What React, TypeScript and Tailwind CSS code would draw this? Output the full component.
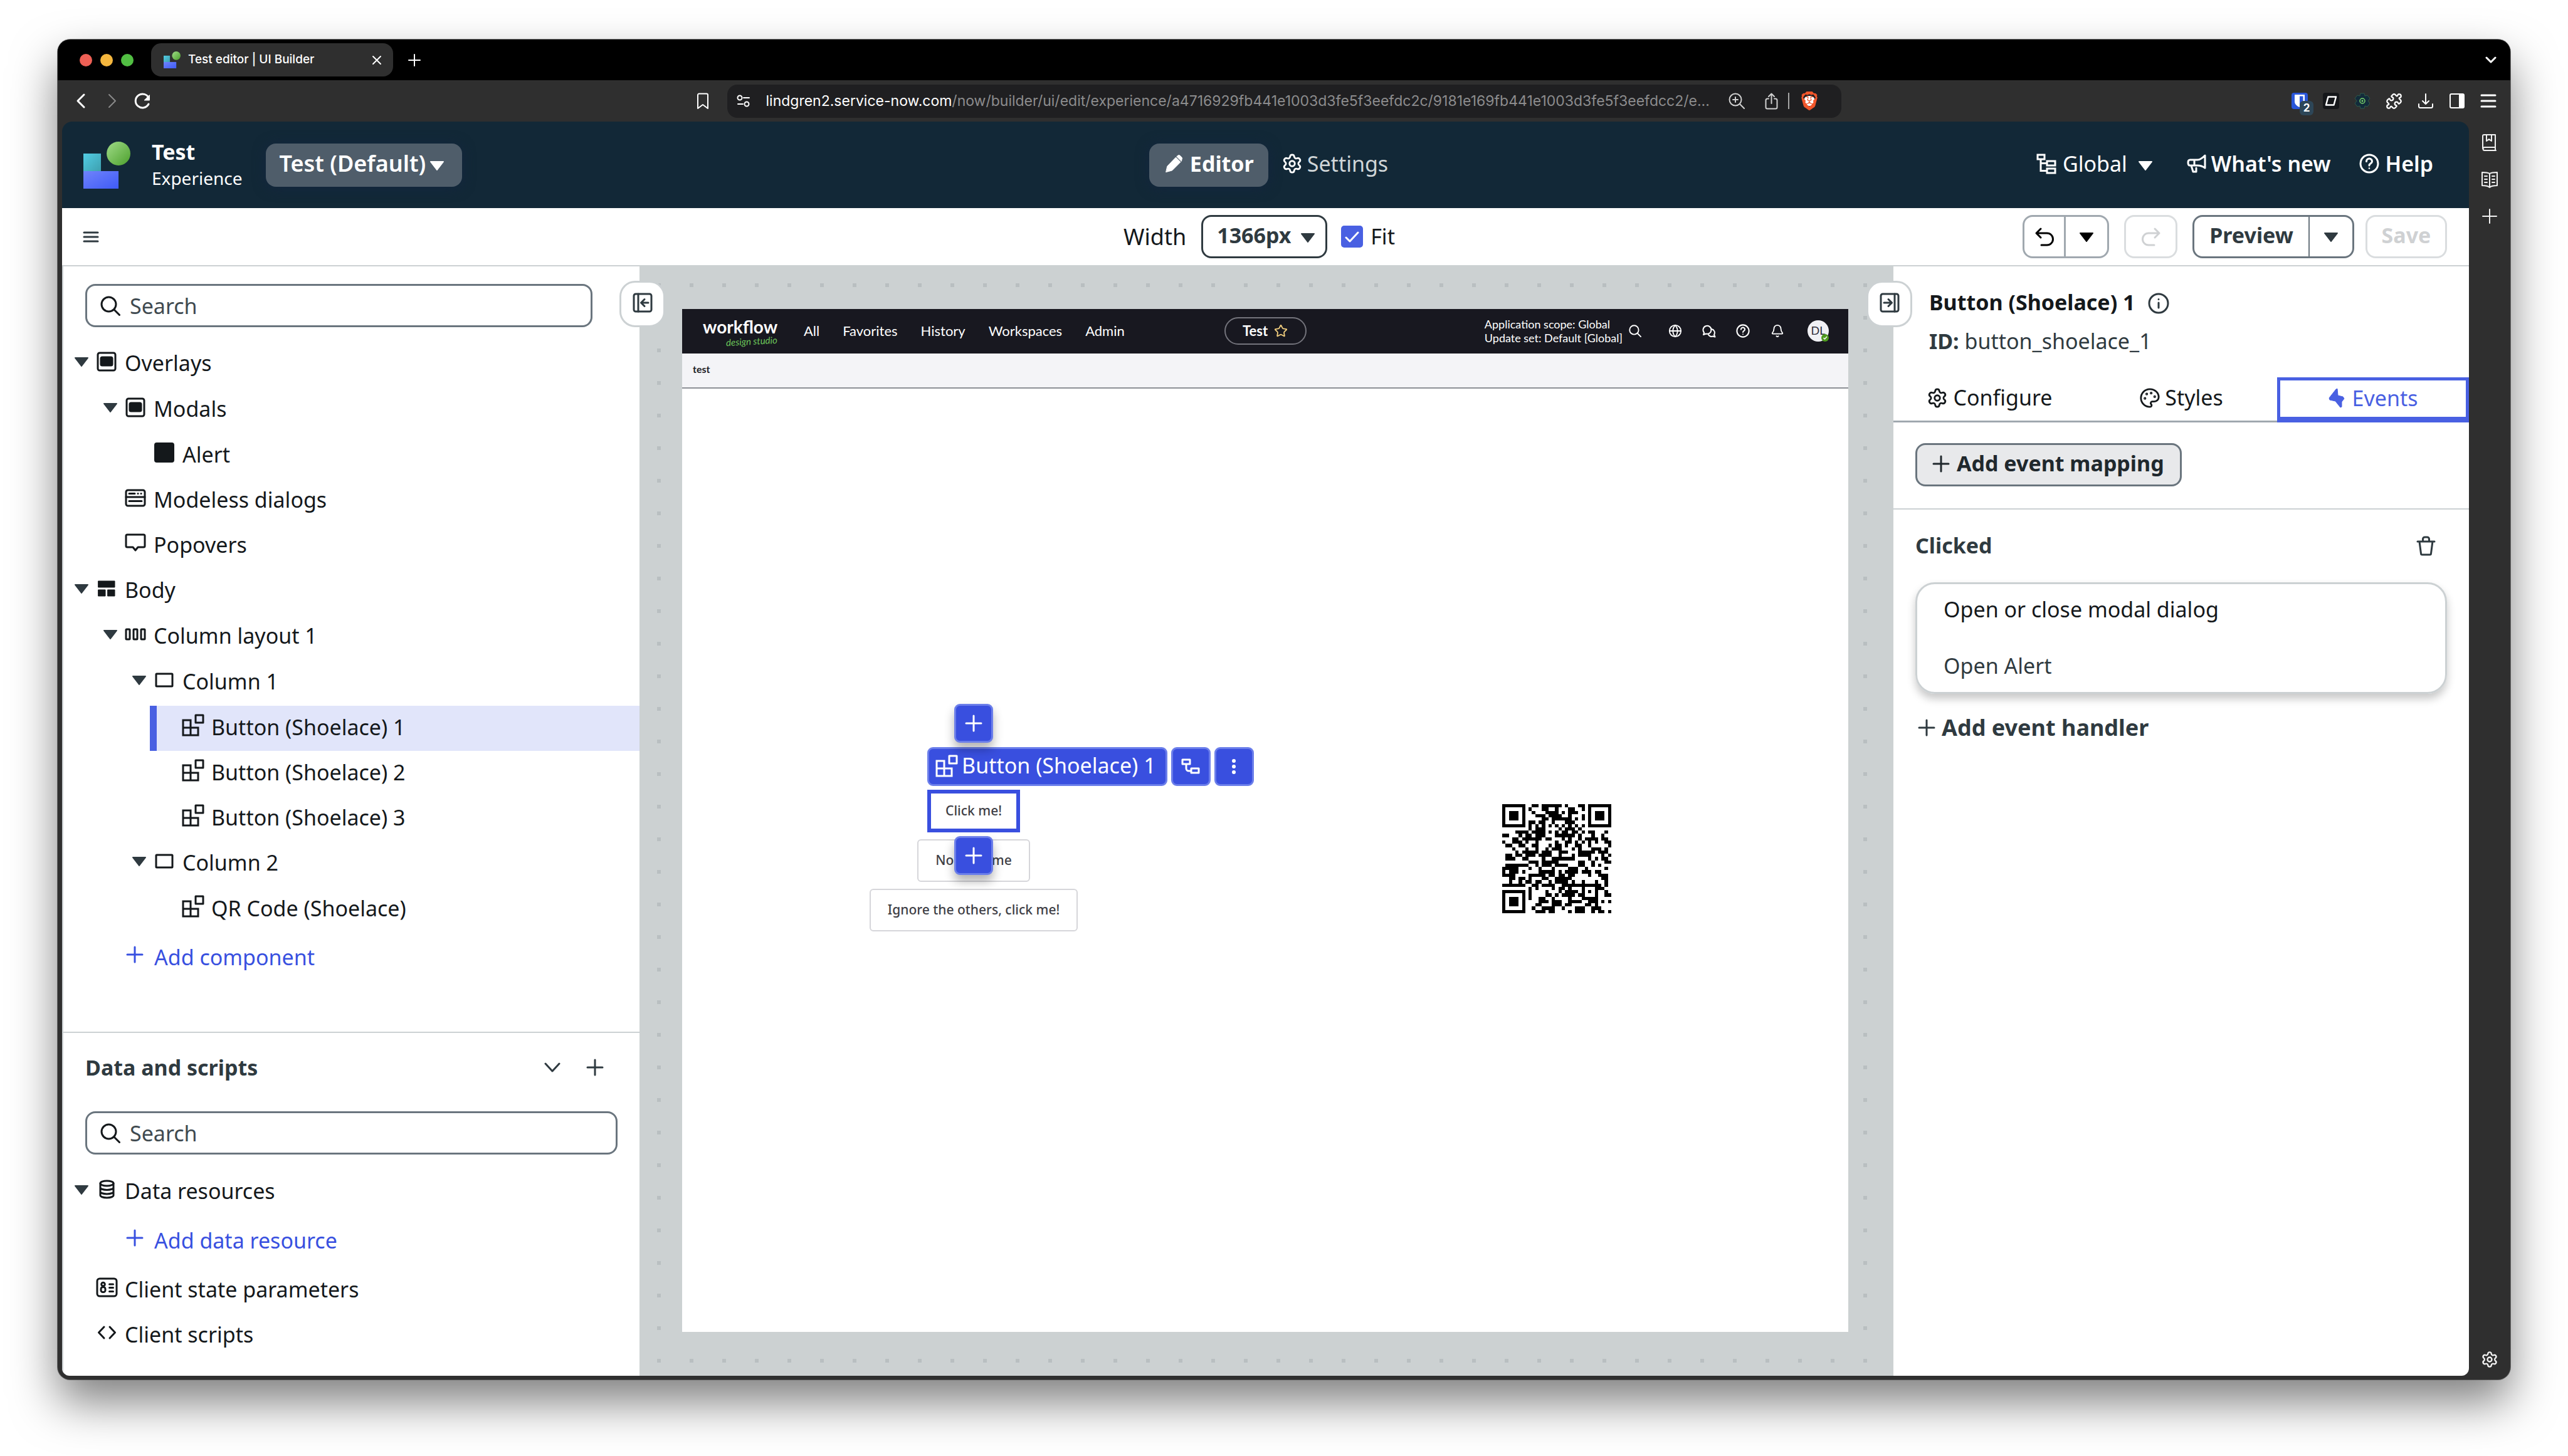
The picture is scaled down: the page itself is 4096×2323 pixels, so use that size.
import React, { ReactNode } from 'react';
import { Bell, Globe, Palette, Puzzle, Settings, Star } from 'lucide-react';
import { SiBrave } from 'react-icons/si';

/* ---------- QR code (version 4, level H, mask 4) ---------- */

const SIZE = 33;

function gfMul(a: number, b: number) {
  let r = 0;
  while (b) {
    if (b & 1) r ^= a;
    a <<= 1;
    if (a & 256) a ^= 0x11d;
    b >>= 1;
  }
  return r;
}

function errorWords(data: number[], count: number) {
  let gen = [1];
  let root = 1;
  for (let i = 0; i < count; i++) {
    const next = new Array(gen.length + 1).fill(0);
    gen.forEach((c, j) => {
      next[j] ^= c;
      next[j + 1] ^= gfMul(c, root);
    });
    gen = next;
    root = gfMul(root, 2);
  }
  const rem = [...data, ...new Array(count).fill(0)];
  for (let i = 0; i < data.length; i++) {
    const c = rem[i];
    if (c) for (let j = 0; j < gen.length; j++) rem[i + j] ^= gfMul(gen[j], c);
  }
  return rem.slice(data.length);
}

function encodeQr(text: string) {
  const byte = (n: number) => n.toString(2).padStart(8, '0');
  let bits = '0100' + byte(text.length);
  for (const ch of text) bits += byte(ch.charCodeAt(0));
  bits += '0000';
  while (bits.length % 8) bits += '0';
  const words: number[] = [];
  for (let i = 0; i < bits.length; i += 8) words.push(parseInt(bits.slice(i, i + 8), 2));
  for (let p = 0; words.length < 36; p++) words.push(p % 2 ? 17 : 236);

  const blocks = [0, 1, 2, 3].map((i) => words.slice(i * 9, i * 9 + 9));
  const checks = blocks.map((b) => errorWords(b, 16));
  const all: number[] = [];
  for (let i = 0; i < 9; i++) blocks.forEach((b) => all.push(b[i]));
  for (let i = 0; i < 16; i++) checks.forEach((b) => all.push(b[i]));

  const m: (number | null)[][] = Array.from({ length: SIZE }, () => new Array(SIZE).fill(null));
  const finder = (r0: number, c0: number) => {
    for (let r = -1; r < 8; r++)
      for (let c = -1; c < 8; c++) {
        const y = r0 + r;
        const x = c0 + c;
        if (y < 0 || x < 0 || y >= SIZE || x >= SIZE) continue;
        const k = Math.max(Math.abs(r - 3), Math.abs(c - 3));
        m[y][x] = k === 3 || k <= 1 ? 1 : 0;
      }
  };
  finder(0, 0);
  finder(0, 26);
  finder(26, 0);
  for (let r = -2; r < 3; r++)
    for (let c = -2; c < 3; c++) m[26 + r][26 + c] = Math.max(Math.abs(r), Math.abs(c)) === 1 ? 0 : 1;
  for (let i = 8; i < 25; i++) {
    m[6][i] = 1 - (i % 2);
    m[i][6] = 1 - (i % 2);
  }
  const format = '000011101100010';
  for (let i = 0; i < 15; i++) {
    const b = Number(format[14 - i]);
    if (i < 6) m[i][8] = b;
    else if (i < 8) m[i + 1][8] = b;
    else m[SIZE - 15 + i][8] = b;
    if (i < 8) m[8][SIZE - 1 - i] = b;
    else if (i < 9) m[8][7] = b;
    else m[8][14 - i] = b;
  }
  m[SIZE - 8][8] = 1;

  const stream = all.map(byte).join('') + '0000000';
  let k = 0;
  let up = true;
  for (let c = SIZE - 1; c > 0; c -= 2) {
    if (c === 6) c--;
    for (let i = 0; i < SIZE; i++) {
      const r = up ? SIZE - 1 - i : i;
      for (const x of [c, c - 1])
        if (m[r][x] === null) {
          const flip = (Math.floor(r / 2) + Math.floor(x / 3)) % 2 === 0 ? 1 : 0;
          m[r][x] = Number(stream[k++]) ^ flip;
        }
    }
    up = !up;
  }
  return m as number[][];
}

function QrCode({ value, className }: { value: string; className: string }) {
  const d = encodeQr(value)
    .map((row, y) => row.map((v, x) => (v ? `M${x} ${y}h1v1h-1z` : '')).join(''))
    .join('');
  return (
    <svg viewBox="0 0 33 33" className={className} shapeRendering="crispEdges" role="img" aria-label="QR code">
      <path d={d} fill="#000" />
    </svg>
  );
}

/* ---------- Icons ---------- */

function Icon({ w, h, sw = 3, className = '', children }: { w: number; h: number; sw?: number; className?: string; children: ReactNode }) {
  return (
    <svg
      width={w}
      height={h}
      viewBox={`0 0 ${w} ${h}`}
      fill="none"
      stroke="currentColor"
      strokeWidth={sw}
      strokeLinecap="round"
      strokeLinejoin="round"
      aria-hidden="true"
      className={`shrink-0 ${className}`}
    >
      {children}
    </svg>
  );
}

const Caret = ({ className = '' }: { className?: string }) => (
  <Icon w={24} h={16} sw={2} className={className}>
    <path d="M2 2h20L12 15z" fill="currentColor" />
  </Icon>
);
const Plus = ({ size = 26, className = '' }: { size?: number; className?: string }) => (
  <Icon w={size} h={size} sw={3} className={className}>
    <path d={`M${size / 2} 2V${size - 2}M2 ${size / 2}H${size - 2}`} />
  </Icon>
);
const SearchIcon = ({ w = 32, sw = 3 }: { w?: number; sw?: number }) => (
  <svg width={w} height={w} viewBox="0 0 32 32" fill="none" stroke="currentColor" strokeWidth={sw} strokeLinecap="round" aria-hidden="true" className="shrink-0">
    <circle cx="13.5" cy="13.5" r="11.5" />
    <path d="M22 22l8.5 8.5" />
  </svg>
);
const HelpIcon = ({ w = 31, sw = 3 }: { w?: number; sw?: number }) => (
  <svg width={w} height={w} viewBox="0 0 32 32" fill="none" stroke="currentColor" strokeWidth={sw} strokeLinecap="round" aria-hidden="true" className="shrink-0">
    <circle cx="16" cy="16" r="14" />
    <path d="M11.5 12.5a4.5 4.5 0 119 0c0 3.4-4.500 3.200-4.500 6.500" />
    <circle cx="16" cy="23.500" r="1.300" fill="currentColor" stroke="none" />
  </svg>
);
const PanelIcon = ({ flip = false }: { flip?: boolean }) => (
  <Icon w={32} h={32} sw={3}>
    <rect x="2" y="2" width="28" height="28" rx="3" />
    {flip ? <path d="M24 2v28M7 16h11M14 10.500l5.500 5.500-5.500 5.500" /> : <path d="M9 2v28M25 16H14M19 10.500L13.500 16l5.500 5.500" />}
  </Icon>
);
const ComponentIcon = () => (
  <Icon w={36} h={36} sw={3}>
    <path d="M2 10h12v12H2zM2 22h12v12H2zM14 22h12v12H14z" strokeLinejoin="miter" />
    <path d="M22 2h12v12H22z" />
  </Icon>
);
const OverlayIcon = () => (
  <Icon w={32} h={32} sw={3}>
    <rect x="2" y="2" width="28" height="28" rx="3" />
    <rect x="7" y="9" width="18" height="13" rx="2" fill="currentColor" />
  </Icon>
);
const SolidIcon = () => (
  <Icon w={32} h={32} sw={2}>
    <rect x="1" y="1" width="30" height="30" rx="3" fill="currentColor" />
  </Icon>
);
const ModelessIcon = () => (
  <Icon w={34} h={29} sw={3}>
    <rect x="2" y="2" width="30" height="25" rx="3" />
    <path d="M2 13h30M7 7.500h9M21 7.500h.1M26 7.500h.1M7 19.500h20" />
  </Icon>
);
const PopoverIcon = () => (
  <Icon w={34} h={30} sw={3}>
    <path d="M4 2h26a2 2 0 012 2v16a2 2 0 01-2 2h-9l-4 5-4-5H4a2 2 0 01-2-2V4a2 2 0 012-2z" />
  </Icon>
);
const BodyIcon = () => (
  <Icon w={28} h={26} sw={1}>
    <path d="M1 1h26v10H1zM1 15h11v10H1zM16 15h11v10H16z" fill="currentColor" />
  </Icon>
);
const ColumnsIcon = () => (
  <Icon w={34} h={20} sw={3}>
    <rect x="2" y="2" width="6" height="16" rx="1" />
    <rect x="14" y="2" width="6" height="16" rx="1" />
    <rect x="26" y="2" width="6" height="16" rx="1" />
  </Icon>
);
const ColumnIcon = () => (
  <Icon w={30} h={24} sw={3}>
    <rect x="2" y="2" width="26" height="20" rx="1" />
  </Icon>
);
const DatabaseIcon = () => (
  <Icon w={25} h={31} sw={3}>
    <ellipse cx="12.500" cy="6" rx="10.500" ry="4" />
    <path d="M2 6v19c0 2 4 4 10.500 4S23 27 23 25V6M2 12.500c0 2 4 4 10.500 4s10.500-2 10.500-4M2 19c0 2 4 4 10.500 4S23 21 23 19" />
  </Icon>
);
const ParamsIcon = () => (
  <Icon w={35} h={32} sw={3}>
    <rect x="2" y="2" width="31" height="28" rx="4" />
    <circle cx="11.500" cy="11" r="2.800" />
    <rect x="8" y="15.500" width="7" height="8" rx="3" />
    <path d="M21.500 11h6M21.500 16.500h6M21.500 22.500h6" />
  </Icon>
);
const CodeIcon = () => (
  <Icon w={31} h={24} sw={3}>
    <path d="M11 3L2.500 12l8.500 9M20 3l8.500 9-8.500 9" />
  </Icon>
);
const Logo = ({ className }: { className: string }) => (
  <svg viewBox="0 0 91 91" className={className} aria-hidden="true">
    <defs>
      <linearGradient id="lg-teal" x1="0" y1="0" x2="1" y2="1">
        <stop offset="0" stopColor="#52cde4" />
        <stop offset="1" stopColor="#3d9fae" />
      </linearGradient>
      <linearGradient id="lg-blue" x1="0" y1="0" x2="1" y2="1">
        <stop offset="0" stopColor="#6f83fb" />
        <stop offset="1" stopColor="#3f5bf6" />
      </linearGradient>
      <linearGradient id="lg-green" x1="0" y1="0" x2="1" y2="1">
        <stop offset="0" stopColor="#a0dc88" />
        <stop offset="1" stopColor="#4c9f2c" />
      </linearGradient>
    </defs>
    <rect x="0" y="23" width="34" height="35" fill="url(#lg-teal)" />
    <rect x="0" y="57" width="68" height="34" fill="url(#lg-blue)" />
    <circle cx="68" cy="23" r="23" fill="url(#lg-green)" />
  </svg>
);

/* ---------- Browser chrome ---------- */

function TabStrip() {
  return (
    <div className="flex h-[65px] items-center bg-black pl-[35px] pr-[22px] text-white">
      <div className="flex gap-[13px]">
        <button aria-label="Close window" className="size-5 rounded-full bg-[#ee6055]" />
        <button aria-label="Minimize window" className="size-5 rounded-full bg-[#f5b73e]" />
        <button aria-label="Zoom window" className="size-5 rounded-full bg-[#52bf43]" />
      </div>
      <div className="ml-[28px] flex h-[53px] w-[386px] items-center rounded-2xl bg-[#2f2f2f] pl-5 pr-[18px]">
        <Logo className="size-[27px]" />
        <span className="ml-3 flex-1 text-[19px] font-medium">Test editor | UI Builder</span>
        <button aria-label="Close tab">
          <Icon w={16} h={16} sw={2}>
            <path d="M2 2l12 12M14 2L2 14" />
          </Icon>
        </button>
      </div>
      <button aria-label="New tab" className="ml-6">
        <Icon w={20} h={20} sw={2}>
          <path d="M10 1v18M1 10h18" />
        </Icon>
      </button>
      <button aria-label="Search tabs" className="ml-auto">
        <Icon w={18} h={12} sw={3}>
          <path d="M2 2l7 7 7-7" />
        </Icon>
      </button>
    </div>
  );
}

function AddressBar() {
  return (
    <div className="grid h-[66px] grid-cols-[1fr_1777px_1fr] items-center text-white">
      <div className="flex items-center px-[29px]">
        <button aria-label="Back">
          <Icon w={16} h={26} sw={3}>
            <path d="M13 3L3 13l10 10" />
          </Icon>
        </button>
        <button aria-label="Forward" className="ml-[34px] text-[#8a8a8a]">
          <Icon w={16} h={26} sw={2}>
            <path d="M3 3l10 10L3 23" />
          </Icon>
        </button>
        <button aria-label="Reload" className="ml-[26px]">
          <Icon w={28} h={28} sw={3}>
            <path d="M24 19a11 11 0 11.500-9" />
            <path d="M25.500 5v8h-8z" fill="currentColor" strokeWidth="1" />
          </Icon>
        </button>
        <button aria-label="Bookmark" className="ml-auto">
          <Icon w={20} h={27} sw={2}>
            <path d="M4 1.500h12a2 2 0 012 2V25l-8-6-8 6V3.500a2 2 0 012-2z" />
          </Icon>
        </button>
      </div>
      <div className="flex h-[53px] items-center rounded-2xl bg-[#1f1f21] pl-[15px] pr-9">
        <Icon w={22} h={20} sw={2}>
          <circle cx="5" cy="5" r="3.500" />
          <path d="M11 5h9M2 15h8" />
          <circle cx="16" cy="15" r="3.500" />
        </Icon>
        <div className="ml-[25px] flex-1 truncate text-[23px] text-[#8c8c8d]">
          <span className="text-white">lindgren2.service-now.com</span>
          /now/builder/ui/edit/experience/a4716929fb441e1003d3fe5f3eefdc2c/9181e169fb441e1003d3fe5f3eefdcc2/e...
        </div>
        <button aria-label="Page zoom" className="text-[#d0d0d0]">
          <Icon w={26} h={26} sw={2}>
            <circle cx="11" cy="11" r="9.500" />
            <path d="M18 18l7 7M11 7v8M7 11h8" />
          </Icon>
        </button>
        <button aria-label="Share" className="ml-8 text-[#d0d0d0]">
          <Icon w={21} h={27} sw={2}>
            <path d="M6 9.500H4a2.500 2.500 0 00-2.500 2.500v11A2.500 2.500 0 004 25.500h13a2.500 2.500 0 002.500-2.500V12A2.500 2.500 0 0017 9.500h-2M10.500 17V2M6 6l4.500-4.500L15 6" />
          </Icon>
        </button>
        <span className="ml-4 h-[26px] w-[2px] bg-[#a5a5a5]" />
        <button aria-label="Brave Shields" className="relative ml-[17px]">
          <span className="absolute inset-x-[6px] inset-y-[7px] rounded-full bg-white" />
          <SiBrave className="relative size-[30px] text-[#f1562b]" />
        </button>
      </div>
      <div className="flex items-center justify-end gap-6 pr-[22px]">
        <button aria-label="Password manager, 2 logins" className="relative">
          <svg width="26" height="26" viewBox="0 0 26 26" aria-hidden="true">
            <rect width="26" height="26" rx="4" fill="#2a56d8" />
            <path d="M5 3h16v11c0 5-5 8-8 9-3-1-8-4-8-9z" fill="#fff" />
            <path d="M13 5.500h5.500V14c0 3-3 5-5.500 6z" fill="#2a56d8" />
          </svg>
          <span className="absolute -bottom-[10px] left-[13px] flex h-[23px] w-[22px] items-center justify-center rounded-md bg-[#2d4657] text-[17px] font-bold">2</span>
        </button>
        <button aria-label="Extension">
          <svg width="26" height="26" viewBox="0 0 26 26" aria-hidden="true">
            <rect width="26" height="26" rx="4" fill="#15171a" />
            <path d="M8.500 6.500H21l-3.500 13H5z" fill="none" stroke="#fff" strokeWidth="2.500" strokeLinejoin="round" />
          </svg>
        </button>
        <button aria-label="Gear extension">
          <svg width="26" height="26" viewBox="0 0 26 26" aria-hidden="true">
            <path d="M10 1h6l1 4 4-1 4 5-3 4 3 4-4 5-4-1-1 4h-6l-1-4-4 1-4-5 3-4-3-4 4-5 4 1z" fill="#122b3a" stroke="#2f5a4a" />
            <circle cx="13" cy="13" r="4" fill="none" stroke="#79d66b" strokeWidth="1.500" />
            <circle cx="13" cy="13" r="1.500" fill="#79d66b" />
          </svg>
        </button>
        <button aria-label="Extensions">
          <Puzzle className="size-[27px]" strokeWidth={2} />
        </button>
        <button aria-label="Downloads">
          <Icon w={26} h={26} sw={2}>
            <path d="M13 2v16M8 13l5 5 5-5M2 18v3.500A2.500 2.500 0 004.500 24h17a2.500 2.500 0 002.500-2.500V18" />
          </Icon>
        </button>
        <button aria-label="Sidebar">
          <Icon w={26} h={26} sw={2}>
            <rect x="2" y="2" width="22" height="22" rx="2" />
            <path d="M17 3h6v20h-6z" fill="currentColor" />
          </Icon>
        </button>
        <button aria-label="Browser menu">
          <Icon w={26} h={22} sw={3}>
            <path d="M2 2h22M2 11h22M2 20h22" />
          </Icon>
        </button>
      </div>
    </div>
  );
}

function BrowserRail() {
  return (
    <nav aria-label="Browser sidebar" className="flex w-[66px] flex-col items-center pb-[18px] pt-[19px] text-[#f1f1f1]">
      <button aria-label="Bookmarks">
        <Icon w={26} h={28} sw={2}>
          <path d="M4 2h18v20H5a2.500 2.500 0 000 5h18M22 22v5M4 2a2 2 0 00-2 2v20M8 2v10l4-3 4 3V2" />
        </Icon>
      </button>
      <button aria-label="Reading list" className="mt-8">
        <Icon w={28} h={28} sw={2}>
          <path d="M14 4v22M14 4c-3-2-8-2-12-2v21c4 0 9 0 12 3 3-3 8-3 12-3V2c-4 0-9 0-12 2zM6 8h4M6 13h4M6 18h4M18 8h4M18 13h4M18 18h4" />
        </Icon>
      </button>
      <button aria-label="Add site" className="mt-8">
        <Icon w={24} h={24} sw={2}>
          <path d="M12 1v22M1 12h22" />
        </Icon>
      </button>
      <button aria-label="Sidebar settings" className="mt-auto">
        <Settings className="size-7" strokeWidth={2} />
      </button>
    </nav>
  );
}

/* ---------- Application header and toolbar ---------- */

function Header() {
  return (
    <header className="grid h-[138px] grid-cols-[1fr_auto_1fr] items-center rounded-t-2xl bg-[#122837] text-white">
      <div className="flex items-center pl-[34px]">
        <Logo className="size-[75px]" />
        <div className="ml-[34px]">
          <div className="text-[34px] font-bold leading-[42px]">Test</div>
          <div className="text-[28px] leading-[42px]">Experience</div>
        </div>
        <button className="ml-[37px] flex h-[69px] items-center gap-1.5 rounded-2xl bg-[#4f5d6a] pb-1 pl-[22px] pr-7 text-[36px] font-semibold shadow-[0_2px_20px_#14263f]">
          Test (Default)
          <Caret className="mt-1.5" />
        </button>
      </div>
      <nav className="ml-2.5 flex items-center" aria-label="View">
        <button className="flex h-[69px] items-center gap-2 rounded-2xl bg-[#4f5d6a] pb-1 pl-[25px] pr-[23px] text-[34px] font-bold shadow-[0_2px_20px_#14263f]">
          <Icon w={32} h={30} sw={1}>
            <path d="M4 19L17.500 5l7.500 7.500L11.500 26 2 28.500z" fill="currentColor" />
            <path d="M19 3.500l2-1.500c2-1 3 0 4.500 1.500s3 3 1.500 5L26.500 11z" fill="currentColor" />
          </Icon>
          Editor
        </button>
        <button className="flex h-[69px] items-center gap-[7px] pb-1 pl-[21px] text-[34px] text-[#cfd5d7]">
          <Settings className="size-[34px] text-white" strokeWidth={2} />
          Settings
        </button>
      </nav>
      <div className="flex items-center justify-end pb-1 pr-[57px] text-[34px]">
        <button className="flex items-center">
          <Icon w={32} h={33} sw={3}>
            <path d="M2 2h11v7H2zM17 12h13v7H17zM17 24h13v7H17zM7 9v18.500h10M7 15.500h10" strokeLinejoin="miter" />
          </Icon>
          <span className="ml-[10px]">Global</span>
          <Caret className="ml-[17px] mt-1.5" />
        </button>
        <a href="#whats-new" className="ml-[54px] flex items-center gap-[7px] font-semibold">
          <Icon w={32} h={32} sw={3}>
            <path d="M29 3v20c-4-3-8-4-12-4H5c-2 0-3-2-3-4.500S3 10 5 10h12c4 0 8-3 12-7zM12 10v9M7 19l3 10h5v-6" />
          </Icon>
          What's new
        </a>
        <a href="#help" className="ml-[45px] flex items-center gap-[10px] font-semibold">
          <HelpIcon w={32} />
          Help
        </a>
      </div>
    </header>
  );
}

function Toolbar() {
  return (
    <div className="grid h-[93px] grid-cols-[1fr_auto_1fr] items-center border-b-2 border-[#ccd1d3] bg-white text-[#2f3a40]">
      <div className="flex pl-[33px]">
        <button aria-label="Menu">
          <Icon w={26} h={18} sw={3}>
            <path d="M2 2h22M2 9h22M2 16h22" />
          </Icon>
        </button>
      </div>
      <div className="mr-5 flex items-center text-[36px] text-[#14181b]">
        <label htmlFor="viewport-width">Width</label>
        <div className="relative ml-6 text-[#2f3a40]">
          <select id="viewport-width" className="h-[69px] w-[201px] appearance-none rounded-2xl border-[3px] border-[#2f3a40] bg-white pb-1 pl-[22px] text-[34px] font-bold">
            <option>1366px</option>
          </select>
          <span className="pointer-events-none absolute right-[19px] top-[28px]">
            <Caret />
          </span>
        </div>
        <label className="relative ml-[22px] flex items-center gap-3 text-[34px]">
          <input type="checkbox" defaultChecked className="size-[35px] appearance-none rounded-[5px] bg-[#4960e2]" />
          <span className="pointer-events-none absolute left-[6px] text-white">
            <Icon w={23} h={20} sw={3}>
              <path d="M2 11l6 6L21 3" />
            </Icon>
          </span>
          Fit
        </label>
      </div>
      <div className="flex items-center justify-end pr-[35px]">
        <div className="flex h-[69px] rounded-2xl border-[3px] border-[#a0a8af] text-black">
          <button aria-label="Undo" className="flex w-[66px] items-center justify-center border-r-[3px] border-[#a0a8af]">
            <Icon w={32} h={32} sw={3}>
              <path d="M10 3L3 10l7 7M3 10h17a9 9 0 010 19h-9" />
            </Icon>
          </button>
          <button aria-label="Undo history" className="flex w-[66px] items-center justify-center">
            <Caret />
          </button>
        </div>
        <button aria-label="Redo" disabled className="ml-6 flex h-[69px] w-[85px] items-center justify-center rounded-2xl border-[3px] border-[#dadddf] text-[#cfd1d3]">
          <Icon w={32} h={32} sw={3}>
            <path d="M22 3l7 7-7 7M29 10H12a9 9 0 000 19h9" />
          </Icon>
        </button>
        <div className="ml-6 flex h-[69px] rounded-2xl border-[3px] border-[#6a757e]">
          <button className="w-[184px] border-r-2 border-[#6a757e] pb-1 text-[34px] font-bold">Preview</button>
          <button aria-label="Preview options" className="flex w-[68px] items-center justify-center">
            <Caret />
          </button>
        </div>
        <button disabled className="ml-[18px] h-[69px] w-[130px] rounded-2xl border-[3px] border-[#dadddf] pb-1 text-[34px] font-bold text-[#cfd1d3]">
          Save
        </button>
      </div>
    </div>
  );
}

/* ---------- Left panel ---------- */

function SearchBox({ id, className }: { id: string; className: string }) {
  return (
    <div className={`relative text-[#14181b] ${className}`}>
      <label htmlFor={id} className="absolute left-6 top-[19px]">
        <SearchIcon />
      </label>
      <input
        id={id}
        type="text"
        aria-label="Search"
        placeholder="Search"
        className="h-[69px] w-full rounded-2xl border-[3px] border-[#6a757e] bg-white pl-[68px] text-[34px] placeholder:text-[#3f4a50]"
      />
    </div>
  );
}

type Node = { depth: number; label: string; icon: ReactNode; open?: boolean; selected?: boolean };

const tree: Node[] = [
  { depth: 0, label: 'Overlays', icon: <OverlayIcon />, open: true },
  { depth: 1, label: 'Modals', icon: <OverlayIcon />, open: true },
  { depth: 2, label: 'Alert', icon: <SolidIcon /> },
  { depth: 1, label: 'Modeless dialogs', icon: <ModelessIcon /> },
  { depth: 1, label: 'Popovers', icon: <PopoverIcon /> },
  { depth: 0, label: 'Body', icon: <BodyIcon />, open: true },
  { depth: 1, label: 'Column layout 1', icon: <ColumnsIcon />, open: true },
  { depth: 2, label: 'Column 1', icon: <ColumnIcon />, open: true },
  { depth: 3, label: 'Button (Shoelace) 1', icon: <ComponentIcon />, selected: true },
  { depth: 3, label: 'Button (Shoelace) 2', icon: <ComponentIcon /> },
  { depth: 3, label: 'Button (Shoelace) 3', icon: <ComponentIcon /> },
  { depth: 2, label: 'Column 2', icon: <ColumnIcon />, open: true },
  { depth: 3, label: 'QR Code (Shoelace)', icon: <ComponentIcon /> },
];

const depthPad = ['pl-[19px]', 'pl-[65px]', 'pl-[111px]', 'pl-[40px]'];

function TreeRow({ node }: { node: Node }) {
  const { depth, label, icon, open, selected } = node;
  const leaf = depth === 3 ? 'ml-[140px] border-l-[11px]' : '';
  const tint = selected ? 'bg-[#e1e5fa] border-[#4960e2]' : 'border-transparent';
  return (
    <li className={`flex items-center pb-1 ${open ? 'h-[73px]' : 'h-[72px]'} ${leaf} ${tint} ${depthPad[depth]}`}>
      {depth < 3 && (
        <span className="mr-[10px] w-6 text-[#2f3a40]">
          {open && (
            <button aria-label={`Collapse ${label}`} className="mb-1.5 block">
              <Caret />
            </button>
          )}
        </span>
      )}
      <span className="mb-1.5 flex w-9 justify-center">{icon}</span>
      <span className="ml-[11px] text-[34px]">{label}</span>
    </li>
  );
}

function AddLink({ label }: { label: string }) {
  return (
    <button className="mt-1.5 flex h-[72px] items-center pb-1 pl-[102px] text-[34px] text-[#3850e0]">
      <Plus size={28} className="mb-2" />
      <span className="ml-[17px]">{label}</span>
    </button>
  );
}

function LeftPanel() {
  return (
    <aside className="relative z-10 flex w-[921px] flex-col border-l-2 border-[#ccd1d3] bg-white text-[#14181b]">
      <button aria-label="Collapse left panel" className="absolute -right-[41px] top-[23px] flex h-[74px] w-[73px] items-center justify-center rounded-[25px] border-[3px] border-[#ccd1d3] bg-white pb-1 text-[#2f3a40]">
        <PanelIcon />
      </button>
      <section className="flex-1 pt-7">
        <SearchBox id="tree-search" className="ml-[35px] mr-[75px]" />
        <ul className="-ml-[2px] mt-[23px]">
          {tree.map((n) => (
            <TreeRow key={n.label} node={n} />
          ))}
        </ul>
        <div className="-ml-[2px]">
          <AddLink label="Add component" />
        </div>
      </section>
      <section className="border-t-2 border-[#ccd1d3] pb-7 pt-[27px]">
        <div className="flex h-[60px] items-center pb-1 pl-[35px] pr-[57px] text-[#2f3a40]">
          <h2 className="flex-1 text-[34px] font-bold">Data and scripts</h2>
          <button aria-label="Collapse section">
            <Icon w={26} h={18} sw={3}>
              <path d="M2 3l11 12L24 3" />
            </Icon>
          </button>
          <button aria-label="Add" className="ml-[41px]">
            <Plus size={28} />
          </button>
        </div>
        <SearchBox id="data-search" className="ml-[35px] mr-[35px] mt-[38px]" />
        <div className="-ml-[2px] mt-6">
          <ul>
            <TreeRow node={{ depth: 0, label: 'Data resources', icon: <DatabaseIcon />, open: true }} />
          </ul>
          <AddLink label="Add data resource" />
          <ul className="mt-1.5">
            <TreeRow node={{ depth: 0, label: 'Client state parameters', icon: <ParamsIcon /> }} />
            <TreeRow node={{ depth: 0, label: 'Client scripts', icon: <CodeIcon /> }} />
          </ul>
        </div>
      </section>
    </aside>
  );
}

/* ---------- Canvas ---------- */

const blueBox = 'flex h-[62px] items-center justify-center rounded-[9px] border-[3px] border-[#6b7eea] bg-[#394fdf] text-white';

function InsertButton({ label, className }: { label: string; className: string }) {
  return (
    <button
      aria-label={label}
      className={`absolute left-1/2 z-20 w-[62px] -translate-x-1/2 shadow-[0_10px_16px_rgba(0,0,0,0.3)] ${blueBox} ${className}`}
    >
      <Plus size={28} />
    </button>
  );
}

const shoelaceButton = 'h-[68px] rounded-md border-2 border-[#d6d6da] bg-white px-[27px] text-[21px] font-medium text-[#3f3f46]';

function Canvas() {
  return (
    <main className="flex min-w-0 flex-1 bg-[#ccd1d2] bg-[conic-gradient(at_6px_6px,transparent_75%,#b9bfc1_75%)] bg-[length:52px_52px] bg-[position:28px_27px] pb-[70px] pl-[68px] pr-[72px] pt-[68px]">
      <div className="flex flex-1 flex-col bg-white">
        <div className="grid h-[71px] grid-cols-[1fr_auto_1fr] items-center bg-[#181820] px-[31px] pb-0.5 font-['Lato',sans-serif] text-[22px] text-white">
          <div className="flex items-center pl-0.5">
            <div className="mr-[42px] flex w-[119px] flex-col pt-1">
              <div className="text-[28px] font-bold leading-[28px]">workflow</div>
              <div className="-rotate-3 self-end whitespace-nowrap text-[15px] italic leading-[18px] text-[#6cc75a]">design studio</div>
            </div>
            <nav className="flex gap-[37px]" aria-label="Main">
              <a href="#all">All</a>
              <a href="#favorites">Favorites</a>
              <a href="#history">History</a>
              <a href="#workspaces">Workspaces</a>
              <a href="#admin">Admin</a>
            </nav>
          </div>
          <button className="flex h-[44px] w-[131px] items-center justify-center gap-2.5 rounded-full border-2 border-[#74747c] font-bold">
            Test
            <Star className="size-[22px] text-[#f3cf7e]" strokeWidth={2} />
          </button>
          <div className="flex items-center justify-end">
            <div className="text-[18px] leading-[22px]">
              <div>Application scope: Global</div>
              <div>Update set: Default [Global]</div>
            </div>
            <button aria-label="Search" className="ml-2.5">
              <SearchIcon w={20} sw={3} />
            </button>
            <button aria-label="Scope" className="ml-[43px]">
              <Globe className="size-[22px]" strokeWidth={2} />
            </button>
            <button aria-label="Chat" className="ml-8">
              <Icon w={22} h={22} sw={2}>
                <path d="M3 14l-1 3 4-1.500a6.500 6.500 0 10-3-2z" />
                <path d="M15 8a6 6 0 014 9l1.500 3.500L17 19.500a6 6 0 01-7-2.500" />
              </Icon>
            </button>
            <button aria-label="Help" className="ml-8">
              <HelpIcon w={22} />
            </button>
            <button aria-label="Notifications" className="ml-[33px]">
              <Bell className="size-[22px]" strokeWidth={2} />
            </button>
            <button aria-label="Account" className="relative ml-[37px] flex size-[34px] items-center justify-center rounded-full bg-[#f1f1f5] text-[18px] text-[#2f2f3a]">
              DL
              <svg viewBox="0 0 14 14" className="absolute -bottom-[1px] -right-[1px] size-[14px]" aria-hidden="true">
                <circle cx="7" cy="7" r="6" fill="#4f9a1f" />
                <path d="M4.500 7l2 2 3.500-4" fill="none" stroke="#fff" strokeWidth="1.500" />
              </svg>
            </button>
          </div>
        </div>
        <div className="flex h-[56px] items-center border-b-2 border-[#8d9096] bg-[#f4f4f7] pb-1 pl-[17px] font-['Lato',sans-serif] text-[16px] font-bold text-[#1d1d25]">test</div>
        <div className="grid flex-1 grid-cols-2 place-items-center">
          <div className="flex flex-col items-center gap-[11px]">
            <div className="relative">
              <InsertButton label="Insert before" className="bottom-full mb-[75px]" />
              <div className="absolute bottom-full left-0 mb-1.5 flex gap-1.5 font-['Noto_Sans',sans-serif]">
                <button className={`gap-[6px] whitespace-nowrap pb-0.5 pl-[10px] pr-[15px] text-[34px] ${blueBox}`}>
                  <ComponentIcon />
                  Button (Shoelace) 1
                </button>
                <button aria-label="Show in tree" className={`w-[63px] ${blueBox}`}>
                  <Icon w={30} h={26} sw={3}>
                    <path d="M2 2h12v7H2zM16 16h12v7H16zM8 9v7a4 4 0 004 4h4" />
                  </Icon>
                </button>
                <button aria-label="More actions" className={`w-[63px] ${blueBox}`}>
                  <svg width="6" height="26" viewBox="0 0 6 26" fill="currentColor" aria-hidden="true">
                    <circle cx="3" cy="4" r="3" />
                    <circle cx="3" cy="13" r="3" />
                    <circle cx="3" cy="22" r="3" />
                  </svg>
                </button>
              </div>
              <button className="block h-[68px] border-[6px] border-[#394fdf] bg-white px-[23px] text-[21px] font-medium text-[#3f3f46]">Click me!</button>
              <InsertButton label="Insert after" className="top-full mt-1.5" />
            </div>
            <button className={shoelaceButton}>No, click me</button>
            <button className={shoelaceButton}>Ignore the others, click me!</button>
          </div>
          <QrCode value="https://www.servicenow.com" className="mb-1.5 size-[174px]" />
        </div>
      </div>
    </main>
  );
}

/* ---------- Right panel ---------- */

function RightPanel() {
  return (
    <aside className="relative z-10 w-[918px] bg-white text-[34px] text-[#2f3a40]">
      <button aria-label="Collapse right panel" className="absolute -left-[43px] top-[23px] flex h-[74px] w-[73px] items-center justify-center rounded-[25px] border-[3px] border-[#ccd1d3] bg-white pb-1">
        <PanelIcon flip />
      </button>
      <div className="pl-[57px] pt-[26px]">
        <div className="flex items-center leading-[62px]">
          <h2 className="font-bold text-[#14181b]">Button (Shoelace) 1</h2>
          <button aria-label="Component information" className="ml-[21px] mt-1">
            <Icon w={34} h={34} sw={3}>
              <circle cx="17" cy="17" r="15" />
              <path d="M17 16v8M17 10.500v.1" />
            </Icon>
          </button>
        </div>
        <div className="leading-[62px]">
          <strong>ID:</strong> button_shoelace_1
        </div>
      </div>
      <div role="tablist" className="mt-[27px] grid h-[72px] grid-cols-3 text-[#14181b]">
        <button role="tab" aria-selected="false" className="flex items-center justify-center gap-[9px] border-b-[3px] border-[#a0a8af] pb-1">
          <Settings className="size-[34px]" strokeWidth={2} />
          Configure
        </button>
        <button role="tab" aria-selected="false" className="flex items-center justify-center gap-[7px] border-b-[3px] border-[#a0a8af] pb-1">
          <Palette className="size-[34px]" strokeWidth={2} />
          Styles
        </button>
        <button role="tab" aria-selected="true" className="flex items-center justify-center gap-3 border-[5px] border-b-[9px] border-[#4960e2] pb-0.5 text-[#4960e2]">
          <Icon w={26} h={31} sw={1}>
            <path d="M12 1L1 15l1 3 9 2 8 10 2-1v-8l4-5-2-3-8-2-1-11z" fill="currentColor" />
          </Icon>
          Events
        </button>
      </div>
      <div className="border-b-2 border-[#ccd1d3] pb-[35px] pl-[35px] pt-[33px]">
        <button className="flex h-[69px] items-center rounded-2xl border-[3px] border-[#6a757e] bg-[#e8e9eb] pb-1 pl-6 pr-[25px] font-bold text-[#20282d]">
          <Plus size={28} />
          <span className="ml-[11px]">Add event mapping</span>
        </button>
      </div>
      <div className="px-[35px] pt-[28px]">
        <div className="flex h-[60px] items-center justify-between">
          <h3 className="pb-0.5 font-bold">Clicked</h3>
          <button aria-label="Delete mapping" className="mr-[18px]">
            <Icon w={31} h={32} sw={3}>
              <path d="M2 9h27M5 9l2.500 19a2 2 0 002 2h12a2 2 0 002-2L26 9M10.500 8V5a3 3 0 013-3h4a3 3 0 013 3v3" />
            </Icon>
          </button>
        </div>
        <a href="#open-alert" className="mt-7 flex flex-col gap-[30px] rounded-[31px] border-[3px] border-[#ccd1d3] pb-3 pl-[42px] pt-[10px] leading-[60px] shadow-[0_8px_14px_rgba(0,0,0,0.22)]">
          <div className="text-[#14181b]">Open or close modal dialog</div>
          <div>Open Alert</div>
        </a>
        <button className="mt-6 flex h-[60px] items-center pl-1 text-[36px] font-bold">
          <Plus size={28} />
          <span className="ml-[10px]">Add event handler</span>
        </button>
      </div>
    </aside>
  );
}

export default function App() {
  return (
    <div className="flex min-h-screen flex-col bg-white px-[92px] pb-[122px] pt-[63px] font-['Inter',sans-serif]">
      <div className="flex flex-1 flex-col overflow-hidden rounded-[20px] bg-[#2f2f2f] shadow-[0_0_0_1px_rgba(0,0,0,0.45),0_36px_72px_rgba(0,0,0,0.5)]">
        <TabStrip />
        <AddressBar />
        <div className="flex flex-1">
          <div className="mb-1.5 ml-[7px] flex min-w-0 flex-1 flex-col overflow-hidden rounded-b-xl font-['Noto_Sans',sans-serif]">
            <Header />
            <Toolbar />
            <div className="flex flex-1">
              <LeftPanel />
              <Canvas />
              <RightPanel />
            </div>
          </div>
          <BrowserRail />
        </div>
      </div>
    </div>
  );
}
